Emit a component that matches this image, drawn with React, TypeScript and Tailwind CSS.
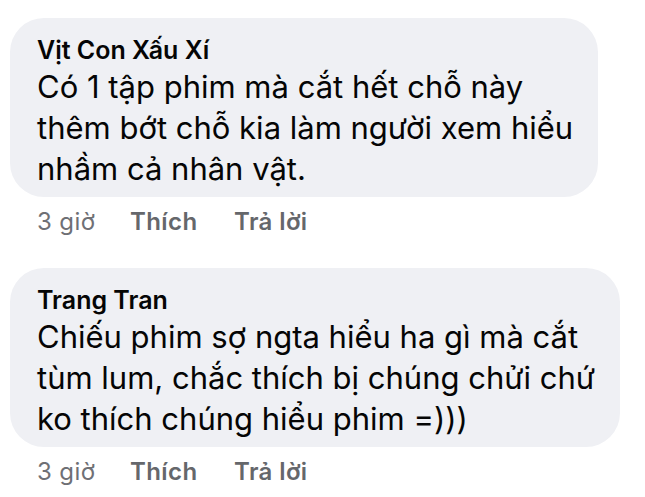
const comments = [
  {
    name: 'Vịt Con Xấu Xí',
    lines: ['Có 1 tập phim mà cắt hết chỗ này', 'thêm bớt chỗ kia làm người xem hiểu', 'nhầm cả nhân vật.'],
  },
  {
    name: 'Trang Tran',
    lines: ['Chiếu phim sợ ngta hiểu ha gì mà cắt', 'tùm lum, chắc thích bị chúng chửi chứ', 'ko thích chúng hiểu phim =)))'],
  },
];

function Comment({ name, lines }: { name: string; lines: string[] }) {
  return (
    <div className="flex flex-col items-start">
      <div className="w-fit rounded-[34px] bg-[#eff0f4] pl-[27px] pr-[25px] pt-[18px] pb-[8px]">
        <p className="text-[25px] leading-[28px] font-semibold text-[#050505]">{name}</p>
        <div className="mt-[2px] text-[31px] leading-[41px] text-[#050505]">
          {lines.map((l) => (
            <p key={l} className="whitespace-nowrap">{l}</p>
          ))}
        </div>
      </div>
      <div className="mt-[11px] flex pl-[27px] text-[24px] leading-[28px] tracking-[0.4px] text-[#65676b]">
        <span className="w-[93px] text-[#6f7075]">3 giờ</span>
        <span className="w-[104px] font-semibold">Thích</span>
        <span className="font-semibold">Trả lời</span>
      </div>
    </div>
  );
}

export default function App() {
  return (
    <div
      className="flex h-[497px] w-[645px] flex-col gap-[32px] bg-white pl-[10px] pt-[18px]"
      style={{ fontFamily: 'Inter, "Noto Sans", sans-serif' }}
    >
      {comments.map((c) => (
        <Comment key={c.name} {...c} />
      ))}
    </div>
  );
}
